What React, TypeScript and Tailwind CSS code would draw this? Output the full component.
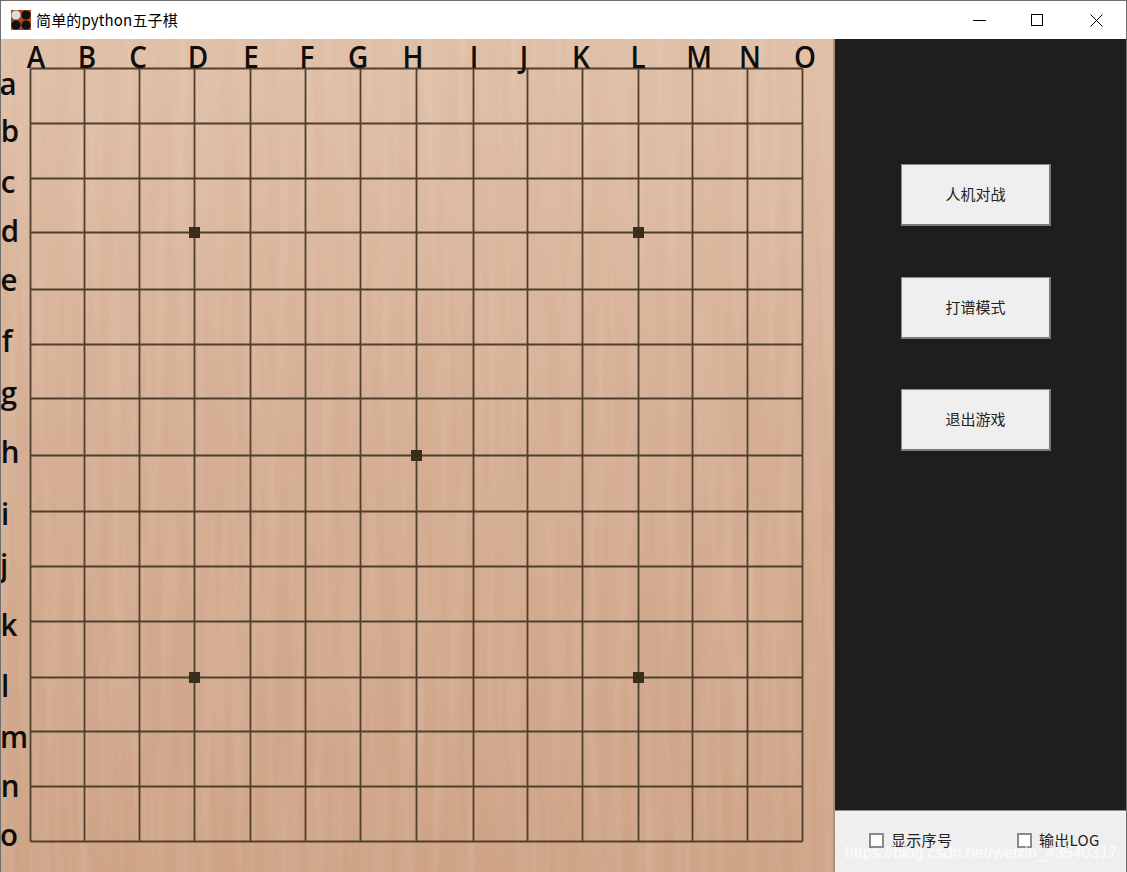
const xs = [30, 84, 139, 194, 250, 305, 360, 416, 473, 527, 582, 638, 692, 747, 802];
const ys = [29, 84, 139, 193, 250, 305, 359, 416, 472, 527, 582, 638, 692, 747, 802];
const stars = [[194, 193], [638, 193], [416, 416], [194, 638], [638, 638]];
const cols = [["A", 36], ["B", 87], ["C", 138], ["D", 198], ["E", 251], ["F", 307], ["G", 358], ["H", 413], ["I", 474], ["J", 524], ["K", 581], ["L", 638], ["M", 699], ["N", 750], ["O", 805]] as const;
const rows = [["a", 8, 44], ["b", 10, 91], ["c", 8, 142], ["d", 10, 191], ["e", 9, 240], ["f", 7, 301], ["g", 9, 353], ["h", 10, 412], ["i", 5, 474], ["j", 4, 525], ["k", 9, 585], ["l", 5, 646], ["m", 14, 697], ["n", 10, 746], ["o", 9, 795]] as const;

function Board() {
  return (
    <div className="relative w-[834px] shrink-0 bg-gradient-to-b from-[#dfbfa6] via-[#d4ad92] to-[#cea386] border-r-2 border-[#a98f78]">
      <svg className="absolute -left-px top-0" width="834" height="833" viewBox="0 0 834 833">
        <defs>
          <filter id="grain" x="0" y="0" width="100%" height="100%">
            <feTurbulence type="fractalNoise" baseFrequency="0.09 0.004" numOctaves="3" seed="7" />
            <feColorMatrix type="matrix" values="0 0 0 0 0.98  0 0 0 0 0.86  0 0 0 0 0.76  0.9 0 0 0 -0.32" />
          </filter>
        </defs>
        <rect width="834" height="833" filter="url(#grain)" opacity="0.3" />
        <g transform="translate(0.5 0.5)">
          <g stroke="#4f3f2c" strokeWidth="1.8">
            {xs.map((x) => <line key={x} x1={x} x2={x} y1={29} y2={802} />)}
            {ys.map((y) => <line key={y} y1={y} y2={y} x1={30} x2={802} />)}
          </g>
          {stars.map(([x, y]) => <rect key={`${x}-${y}`} x={x - 5.5} y={y - 5.5} width="11" height="11" fill="#3b2d1b" />)}
        </g>
      </svg>
      {cols.map(([c, x]) => (
        <span key={c} className="absolute -top-px -translate-x-1/2 font-['Open_Sans',sans-serif] font-semibold text-[31px] leading-[36px] text-[#100e0c] scale-x-90" style={{ left: x - 1 }}>{c}</span>
      ))}
      {rows.map(([c, x, y]) => (
        <span key={c} className="absolute -translate-x-1/2 -translate-y-1/2 font-['Open_Sans',sans-serif] font-semibold text-[31px] leading-[40px] text-[#100e0c] scale-x-95" style={{ left: x - 1, top: y }}>{c}</span>
      ))}
    </div>
  );
}

function GameButton({ label, className = "" }: { label: string; className?: string }) {
  return (
    <button className={`w-[150px] h-[62px] bg-[#efefef] border border-[#8a8a8a] border-b-2 border-r-2 border-b-[#7a7a7a] border-r-[#7a7a7a] text-[15px] text-[#222222] font-['Noto_Sans_CJK_SC',sans-serif] ${className}`}>
      {label}
    </button>
  );
}

function Check({ label, className }: { label: string; className: string }) {
  return (
    <div className={`absolute top-[19px] flex items-center gap-[7px] text-[15px] tracking-[0.3px] text-[#222222] font-['Noto_Sans_CJK_SC',sans-serif] ${className}`}>
      <span className="w-[15px] h-[15px] bg-white border-2 border-[#8a8a8a]" />
      <span className="leading-[20px]">{label}</span>
    </div>
  );
}

export default function App() {
  return (
    <div className="w-[1127px] h-[872px] flex flex-col overflow-hidden bg-white border-t border-l border-r border-[#6f6f6f] relative">
      <div className="h-[38px] shrink-0 flex items-center bg-white">
        <svg className="ml-[10px]" width="20" height="20" viewBox="0 0 20 20">
          <rect width="20" height="20" fill="#a9481f" />
          <circle cx="5" cy="5" r="4.6" fill="#d5e0d8" />
          <circle cx="15" cy="5" r="4.6" fill="#111" />
          <circle cx="5" cy="15" r="4.6" fill="#111" />
          <circle cx="15" cy="15" r="4.6" fill="#111" />
        </svg>
        <span className="ml-[5px] text-[15px] tracking-[0.15px] text-black font-['Noto_Sans_CJK_SC',sans-serif]">简单的python五子棋</span>
        <div className="ml-auto flex items-center">
          <svg className="mr-[45px]" width="13" height="13" viewBox="0 0 13 13"><line x1="0" x2="13" y1="6.5" y2="6.5" stroke="#000" /></svg>
          <svg className="mr-[46px]" width="13" height="13" viewBox="0 0 13 13"><rect x="0.5" y="0.5" width="11" height="11" fill="none" stroke="#000" /></svg>
          <svg className="mr-[23px]" width="13" height="13" viewBox="0 0 13 13"><path d="M0.5 0.5 L12.5 12.5 M12.5 0.5 L0.5 12.5" stroke="#000" fill="none" /></svg>
        </div>
      </div>
      <div className="flex-1 flex min-h-0">
        <Board />
        <div className="flex-1 flex flex-col">
          <div className="flex-1 bg-[#1e1e1e] flex flex-col items-center pt-[125px] gap-[51px] pr-[9px]">
            <GameButton label="人机对战" />
            <GameButton label="打谱模式" />
            <GameButton label="退出游戏" className="-mt-px" />
          </div>
          <div className="relative h-[62px] shrink-0 bg-[#efefef] border-t border-[#8d8d8d]">
            <Check label="显示序号" className="left-[34px]" />
            <Check label="输出LOG" className="left-[182px]" />
            <span className="absolute left-[10px] top-[32px] text-[16px] leading-[20px] text-white/80 font-['Liberation_Sans',sans-serif]">https://blog.csdn.net/weixin_43540317</span>
          </div>
        </div>
      </div>
    </div>
  );
}
